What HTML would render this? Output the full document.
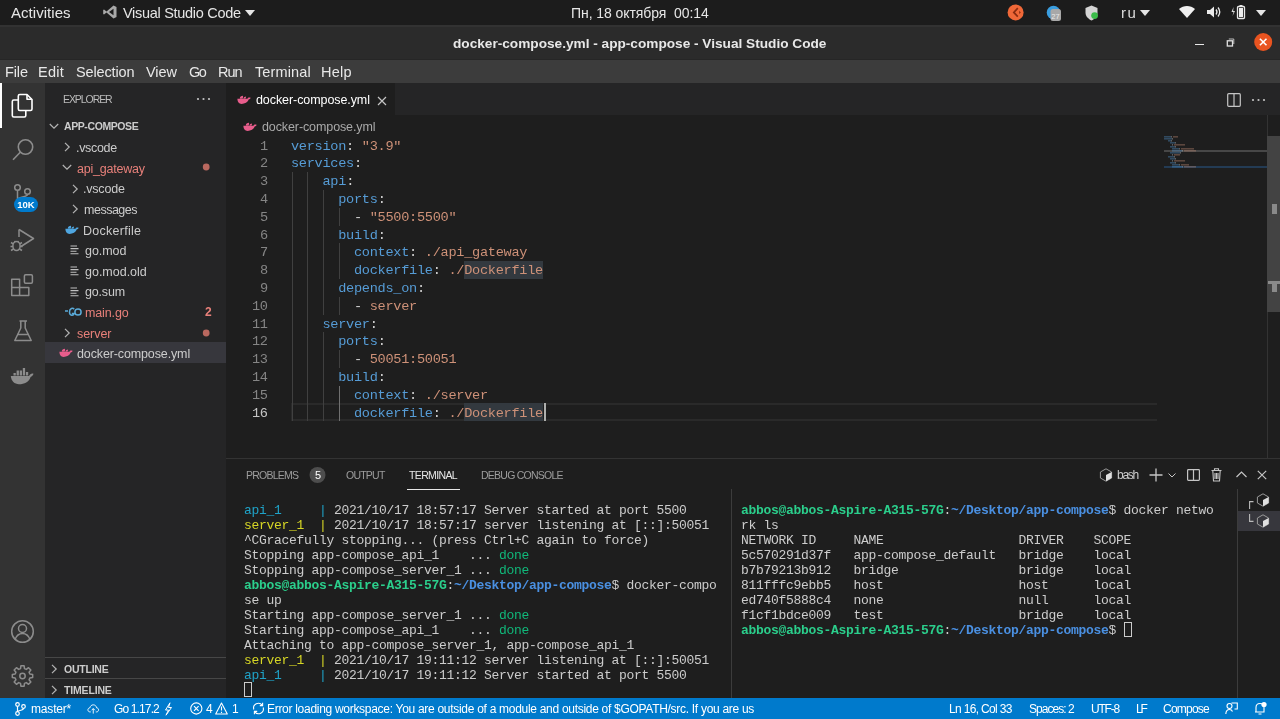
<!DOCTYPE html>
<html><head><meta charset="utf-8"><style>*{margin:0;padding:0;box-sizing:border-box}
html,body{width:1280px;height:719px;overflow:hidden;background:#1e1e1e;font-family:"Liberation Sans",sans-serif;position:relative}
.a{position:absolute;white-space:pre;will-change:transform}
.b{position:absolute}
svg{position:absolute;overflow:visible}
</style></head><body>
<div class="b" style="left:0;top:0;width:1280px;height:25px;background:#1c1c1c"></div>
<div class="b" style="left:0;top:25px;width:1280px;height:35px;background:#2b2b2b"></div>
<div class="b" style="left:0;top:60px;width:1280px;height:23px;background:#3c3c3c"></div>
<div class="b" style="left:0;top:25px;width:1280px;height:2px;background:#323232"></div>
<div class="b" style="left:0;top:59px;width:1280px;height:1px;background:#262626"></div>
<div class="b" style="left:0;top:83px;width:45px;height:615px;background:#333333"></div>
<div class="b" style="left:45px;top:83px;width:181px;height:615px;background:#252526"></div>
<div class="b" style="left:226px;top:83px;width:1054px;height:32px;background:#252526"></div>
<div class="b" style="left:226px;top:83px;width:169px;height:32px;background:#1e1e1e"></div>
<div class="b" style="left:226px;top:458px;width:1054px;height:1px;background:#333333"></div>
<div class="b" style="left:0;top:698px;width:1280px;height:21px;background:#007acc"></div>
<div class="a" style="left:11.00px;top:2.75px;font-size:15px;line-height:20px;color:#e6e6e6;letter-spacing:0.036px;">Activities</div>
<svg style="left:102px;top:4px" width="16" height="16" viewBox="0 0 16 16"><path d="M11.5 1.5 L14.5 3 V13 L11.5 14.5 L4.5 8.5 L2 10.5 L1.2 10 V6 L2 5.5 L4.5 7.5 Z M11.5 4.8 L7 8 L11.5 11.2 Z" fill="#a8a8a8" fill-rule="evenodd"/></svg>
<div class="a" style="left:123.00px;top:4.00px;font-size:14.5px;line-height:19px;color:#e6e6e6;letter-spacing:-0.294px;">Visual Studio Code</div>
<svg style="left:245px;top:10px" width="10" height="6"><path d="M0 0H10L5 6Z" fill="#e6e6e6"/></svg>
<div class="a" style="left:571.00px;top:3.75px;font-size:14px;line-height:18px;color:#e6e6e6;letter-spacing:-0.068px;">Пн, 18 октября  00:14</div>
<svg style="left:1006px;top:3px" width="20" height="20"><circle cx="9.6" cy="9.4" r="8" fill="#f06838"/><path d="M11.8 5.2 L7.8 9.4 L11.8 13.6" stroke="#8a2c10" stroke-width="1.7" fill="none"/><path d="M13.2 7.8 L14.8 9.4 L13.2 11" fill="#8a2c10"/></svg>
<svg style="left:1044px;top:3px" width="20" height="20"><circle cx="9.5" cy="9.5" r="6.8" fill="#3a9ee0"/><rect x="6.5" y="6" width="10.5" height="12" rx="2.5" fill="#a8a8a8"/><text x="7.3" y="15.5" font-size="7.5" font-family="Liberation Sans" fill="#e8e8e8">27</text></svg>
<svg style="left:1083px;top:3.5px" width="18" height="18"><path d="M8.5 1.5 L14.5 4 V8.5 C14.5 12.5 11.5 15 8.5 16.5 C5.5 15 2.5 12.5 2.5 8.5 V4Z" fill="#d4d4d4"/><circle cx="11.6" cy="11.6" r="3.4" fill="#3cbc4a"/></svg>
<div class="a" style="left:1120.50px;top:2.50px;font-size:15px;line-height:20px;color:#dcdcdc;letter-spacing:1.505px;">ru</div>
<svg style="left:1140px;top:10px" width="10" height="6"><path d="M0 0H10L5 6Z" fill="#e6e6e6"/></svg>
<svg style="left:1178px;top:4px" width="18" height="16"><path d="M9 14 L1 5 C5.5 1 12.5 1 17 5 Z" fill="#f0f0f0"/></svg>
<svg style="left:1205px;top:4px" width="18" height="16"><path d="M2 6 H5 L9 2.5 V13.5 L5 10 H2 Z" fill="#eaeaea"/><path d="M11 5.5 Q13 8 11 10.5 M13 3.5 Q16.5 8 13 12.5" stroke="#eaeaea" stroke-width="1.3" fill="none"/></svg>
<svg style="left:1230px;top:3px" width="18" height="18"><path d="M3.5 4 L1.5 9 H3.5 L2.5 13 L5 8 H3.2Z" fill="#dcdcdc"/><rect x="7.5" y="3.5" width="7" height="12" rx="1" fill="none" stroke="#e8e8e8" stroke-width="1.3"/><rect x="9.5" y="2" width="3" height="1.5" fill="#e8e8e8"/><rect x="9" y="5" width="4" height="9" fill="#eeeeee"/></svg>
<svg style="left:1256px;top:10px" width="10" height="6"><path d="M0 0H10L5 6Z" fill="#e6e6e6"/></svg>
<div class="a" style="left:453.00px;top:34.80px;font-size:13.65px;line-height:18px;color:#e8e8e8;font-weight:bold;">docker-compose.yml - app-compose - Visual Studio Code</div>
<div class="b" style="left:1195px;top:44px;width:9px;height:1.3px;background:#e8e8e8"></div>
<svg style="left:1225px;top:37px" width="10" height="10"><rect x="2.3" y="3.8" width="5.2" height="5.2" fill="none" stroke="#e0e0e0" stroke-width="1.3"/><path d="M3.8 2 H8.8 V7" fill="none" stroke="#cfcfcf" stroke-width="0.9"/></svg>
<svg style="left:1254px;top:33px" width="20" height="20"><circle cx="9.2" cy="9" r="9" fill="#e95420"/><path d="M5.9 5.7 L12.5 12.3 M12.5 5.7 L5.9 12.3" stroke="#fff" stroke-width="1.6"/></svg>
<div class="a" style="left:5.20px;top:63.00px;font-size:14.5px;line-height:19px;color:#e8e8e8;letter-spacing:-0.133px;">File</div>
<div class="a" style="left:38.40px;top:63.00px;font-size:14.5px;line-height:19px;color:#e8e8e8;letter-spacing:0.248px;">Edit</div>
<div class="a" style="left:75.90px;top:63.00px;font-size:14.5px;line-height:19px;color:#e8e8e8;letter-spacing:-0.136px;">Selection</div>
<div class="a" style="left:146.20px;top:63.00px;font-size:14.5px;line-height:19px;color:#e8e8e8;letter-spacing:-0.065px;">View</div>
<div class="a" style="left:189.00px;top:63.00px;font-size:14.5px;line-height:19px;color:#e8e8e8;letter-spacing:-1.579px;">Go</div>
<div class="a" style="left:217.80px;top:63.00px;font-size:14.5px;line-height:19px;color:#e8e8e8;letter-spacing:-0.968px;">Run</div>
<div class="a" style="left:255.30px;top:63.00px;font-size:14.5px;line-height:19px;color:#e8e8e8;letter-spacing:0.118px;">Terminal</div>
<div class="a" style="left:321.00px;top:63.00px;font-size:14.5px;line-height:19px;color:#e8e8e8;letter-spacing:0.248px;">Help</div>
<div class="b" style="left:0;top:83px;width:2px;height:45px;background:#ffffff"></div>
<svg style="left:10px;top:93px" width="25" height="26" viewBox="0 0 25 26"><g fill="none" stroke="#ffffff" stroke-width="1.6" stroke-linejoin="round"><path d="M9.8 1.5 H17 L22 6.5 V16 C22 16.8 21.3 17.5 20.5 17.5 H9.8 C9 17.5 8.3 16.8 8.3 16 V3 C8.3 2.2 9 1.5 9.8 1.5 Z"/><path d="M17 1.8 V6.2 H21.7"/><path d="M8.3 7 H3.8 C3 7 2.3 7.7 2.3 8.5 V22.5 C2.3 23.3 3 24 3.8 24 H14.3 C15.1 24 15.8 23.3 15.8 22.5 V17.5"/></g></svg>
<svg style="left:11px;top:138px" width="24" height="24" viewBox="0 0 24 24"><g fill="none" stroke="#8c8c8c" stroke-width="1.6"><circle cx="14.5" cy="9" r="7.2"/><path d="M9.5 14 L2 21.8"/></g></svg>
<svg style="left:11px;top:182px" width="24" height="24" viewBox="0 0 24 24"><g fill="none" stroke="#8c8c8c" stroke-width="1.5"><circle cx="6.5" cy="5.5" r="2.8"/><circle cx="16.5" cy="9.5" r="2.8"/><path d="M6.5 8.3 V20"/><path d="M16.5 12.3 C16.5 16 6.5 14 6.5 18"/></g></svg>
<div class="a" style="left:14px;top:197px;width:24px;height:15px;border-radius:8px;background:#007acc;color:#fff;font-size:9.5px;font-weight:bold;line-height:15px;text-align:center">10K</div>
<svg style="left:9px;top:227px" width="27" height="28" viewBox="0 0 27 28"><g fill="none" stroke="#8c8c8c" stroke-width="1.5" stroke-linejoin="round"><path d="M10 2.5 L24.5 11.5 L12 19.5"/><path d="M10 2.5 V10"/><ellipse cx="7.5" cy="19" rx="3.6" ry="4.5"/><path d="M2 15.5 L4.2 16.8 M13 15.5 L10.8 16.8 M1.5 19.5 H4 M13.5 19.5 H11 M2 23.5 L4.5 22 M13 23.5 L10.5 22 M5.5 14 L6.3 15 M9.5 14 L8.7 15"/></g></svg>
<svg style="left:10px;top:273px" width="25" height="26" viewBox="0 0 25 26"><g fill="none" stroke="#8c8c8c" stroke-width="1.5" stroke-linejoin="round"><path d="M1.7 6.2 H9.6 V14.6 H18.8 V22.4 H1.7 Z M1.7 14.6 H9.6 V22.4"/><rect x="14.4" y="1.7" width="8" height="8.5" rx="1.2"/></g></svg>
<svg style="left:13px;top:319px" width="20" height="24" viewBox="0 0 20 24"><g fill="none" stroke="#8c8c8c" stroke-width="1.5" stroke-linejoin="round"><path d="M6.5 2 H14"/><path d="M7.8 2 V9 L1.8 21.5 H18.2 L12.2 9 V2"/><path d="M4.5 15.5 H15.5"/></g></svg>
<svg style="left:10px;top:367px" width="24" height="18" viewBox="0 0 24 18"><path fill="#8c8c8c" d="M0.8 9 H19 C20 7.3 21.5 6 23.5 6.8 C23 8.6 21.8 9.6 20.6 9.9 C19 14.8 14.5 17.2 9 17.2 C4.5 17.2 1.2 14 0.8 9 Z"/><g fill="#8c8c8c"><rect x="3.5" y="6" width="2.3" height="2.5"/><rect x="6.6" y="3.5" width="2.3" height="5"/><rect x="9.7" y="3.5" width="2.3" height="5"/><rect x="12.8" y="1" width="2.3" height="7.5"/><rect x="15.9" y="5" width="2.3" height="3.5"/></g></svg>
<svg style="left:10px;top:619px" width="25" height="25" viewBox="0 0 25 25"><g fill="none" stroke="#8c8c8c" stroke-width="1.5"><circle cx="12.5" cy="12.5" r="10.8"/><circle cx="12.5" cy="9.5" r="4"/><path d="M5 20.5 C6.5 16.5 9 14.5 12.5 14.5 C16 14.5 18.5 16.5 20 20.5"/></g></svg>
<svg style="left:10px;top:664px" width="25" height="25" viewBox="0 0 25 25"><g fill="none" stroke="#8c8c8c" stroke-width="1.5" stroke-linejoin="round"><path d="M19.84 10.03 L22.67 10.39 L22.67 13.61 L19.84 13.97 L19.08 15.80 L20.83 18.05 L18.55 20.33 L16.30 18.58 L14.47 19.34 L14.11 22.17 L10.89 22.17 L10.53 19.34 L8.70 18.58 L6.45 20.33 L4.17 18.05 L5.92 15.80 L5.16 13.97 L2.33 13.61 L2.33 10.39 L5.16 10.03 L5.92 8.20 L4.17 5.95 L6.45 3.67 L8.70 5.42 L10.53 4.66 L10.89 1.83 L14.11 1.83 L14.47 4.66 L16.30 5.42 L18.55 3.67 L20.83 5.95 L19.08 8.20 Z"/><circle cx="12.5" cy="12.0" r="2.7"/></g></svg>
<div class="a" style="left:63.40px;top:92.40px;font-size:10.5px;line-height:14px;color:#bbbbbb;letter-spacing:-1.072px;">EXPLORER</div>
<svg style="left:196px;top:97px" width="16" height="4"><circle cx="2" cy="2" r="1.1" fill="#c5c5c5"/><circle cx="7.5" cy="2" r="1.1" fill="#c5c5c5"/><circle cx="13" cy="2" r="1.1" fill="#c5c5c5"/></svg>
<svg style="left:49px;top:123.39999999999999px" width="10" height="7"><path d="M0.8 1 L5 5.2 L9.2 1" fill="none" stroke="#b4b4b4" stroke-width="1.2"/></svg>
<div class="a" style="left:63.90px;top:119.25px;font-size:10.5px;line-height:14px;color:#cccccc;font-weight:bold;letter-spacing:-0.406px;">APP-COMPOSE</div>
<div class="b" style="left:45px;top:342px;width:181px;height:21px;background:#37373d"></div>
<svg style="left:63.5px;top:142.4px" width="7" height="10"><path d="M1 0.8 L5.2 5 L1 9.2" fill="none" stroke="#b4b4b4" stroke-width="1.2"/></svg>
<div class="a" style="left:76.10px;top:140.20px;font-size:12.5px;line-height:16px;color:#cccccc;letter-spacing:-0.321px;">.vscode</div>
<svg style="left:61.8px;top:164.3px" width="10" height="7"><path d="M0.8 1 L5 5.2 L9.2 1" fill="none" stroke="#b4b4b4" stroke-width="1.2"/></svg>
<div class="a" style="left:77.00px;top:160.80px;font-size:12.5px;line-height:16px;color:#e8807a;letter-spacing:-0.224px;">api_gateway</div>
<svg style="left:71.5px;top:183.60000000000002px" width="7" height="10"><path d="M1 0.8 L5.2 5 L1 9.2" fill="none" stroke="#b4b4b4" stroke-width="1.2"/></svg>
<div class="a" style="left:83.40px;top:181.40px;font-size:12.5px;line-height:16px;color:#cccccc;letter-spacing:-0.204px;">.vscode</div>
<svg style="left:71.5px;top:204.20000000000002px" width="7" height="10"><path d="M1 0.8 L5.2 5 L1 9.2" fill="none" stroke="#b4b4b4" stroke-width="1.2"/></svg>
<div class="a" style="left:84.40px;top:202.00px;font-size:12.5px;line-height:16px;color:#cccccc;letter-spacing:-0.489px;">messages</div>
<svg style="left:65.4px;top:224.8px" width="14" height="9.1" viewBox="0 0 20 13"><path fill="#4fa6e0" d="M0.5 5.5 H15 C15.5 3.5 17 3 19.5 3.8 C19 5.5 18 6 17 6.2 C15.5 10.5 11 12.8 6.5 12.8 C2.5 12.8 0.8 10 0.5 5.5 Z M4 5 C4 2.5 6 1 8.5 1 C9 2.5 8.5 4 8 5 Z M9 5 C9.5 3 11 2 13 2 C13 3.5 12.5 4.5 12 5 Z"/></svg>
<div class="a" style="left:83.40px;top:222.60px;font-size:12.5px;line-height:16px;color:#cccccc;letter-spacing:0.264px;">Dockerfile</div>
<svg style="left:70.3px;top:245.4px" width="10" height="10"><g stroke="#c0c0c0" stroke-width="1.1"><path d="M0.5 1 H7 M0.5 3.6 H8.5 M0.5 6.2 H6.5 M0.5 8.8 H8.5"/></g></svg>
<div class="a" style="left:84.80px;top:243.20px;font-size:12.5px;line-height:16px;color:#cccccc;letter-spacing:-0.048px;">go.mod</div>
<svg style="left:70.3px;top:266.0px" width="10" height="10"><g stroke="#c0c0c0" stroke-width="1.1"><path d="M0.5 1 H7 M0.5 3.6 H8.5 M0.5 6.2 H6.5 M0.5 8.8 H8.5"/></g></svg>
<div class="a" style="left:84.80px;top:263.80px;font-size:12.5px;line-height:16px;color:#cccccc;letter-spacing:-0.011px;">go.mod.old</div>
<svg style="left:70.3px;top:286.6px" width="10" height="10"><g stroke="#c0c0c0" stroke-width="1.1"><path d="M0.5 1 H7 M0.5 3.6 H8.5 M0.5 6.2 H6.5 M0.5 8.8 H8.5"/></g></svg>
<div class="a" style="left:84.80px;top:284.40px;font-size:12.5px;line-height:16px;color:#cccccc;letter-spacing:-0.176px;">go.sum</div>
<svg style="left:64.9px;top:307.20000000000005px" width="17" height="10" viewBox="0 0 17 10"><g fill="none" stroke="#5aaad8" stroke-width="1.5"><path d="M0 4 H3"/><path d="M9.2 2.2 C8 0.8 4.5 1 4.5 5 C4.5 9 8.5 9 9.2 6.5 H6.8"/><circle cx="13" cy="5" r="3.1"/></g></svg>
<div class="a" style="left:84.80px;top:305.00px;font-size:12.5px;line-height:16px;color:#e8807a;letter-spacing:-0.136px;">main.go</div>
<svg style="left:63.5px;top:327.8px" width="7" height="10"><path d="M1 0.8 L5.2 5 L1 9.2" fill="none" stroke="#b4b4b4" stroke-width="1.2"/></svg>
<div class="a" style="left:77.20px;top:325.60px;font-size:12.5px;line-height:16px;color:#e8807a;letter-spacing:-0.053px;">server</div>
<svg style="left:58.6px;top:348.4px" width="14" height="9.1" viewBox="0 0 20 13"><path fill="#e85d8c" d="M0.5 5.5 H15 C15.5 3.5 17 3 19.5 3.8 C19 5.5 18 6 17 6.2 C15.5 10.5 11 12.8 6.5 12.8 C2.5 12.8 0.8 10 0.5 5.5 Z M4 5 C4 2.5 6 1 8.5 1 C9 2.5 8.5 4 8 5 Z M9 5 C9.5 3 11 2 13 2 C13 3.5 12.5 4.5 12 5 Z"/></svg>
<div class="a" style="left:77.20px;top:346.20px;font-size:12.5px;line-height:16px;color:#cccccc;letter-spacing:-0.126px;">docker-compose.yml</div>
<svg style="left:202px;top:163.3px" width="8" height="8"><circle cx="4.2" cy="4" r="3.4" fill="#b9685f"/></svg>
<svg style="left:202px;top:328.5px" width="8" height="8"><circle cx="4.2" cy="4" r="3.4" fill="#b9685f"/></svg>
<div class="a" style="left:204.50px;top:304.20px;font-size:12px;line-height:16px;color:#e8807a;font-weight:bold;">2</div>
<div class="b" style="left:45px;top:657px;width:181px;height:1px;background:#474747"></div>
<div class="b" style="left:45px;top:678px;width:181px;height:1px;background:#474747"></div>
<svg style="left:50.5px;top:663.8px" width="7" height="10"><path d="M1 0.8 L5.2 5 L1 9.2" fill="none" stroke="#b4b4b4" stroke-width="1.2"/></svg>
<div class="a" style="left:64.00px;top:661.80px;font-size:10.5px;line-height:14px;color:#cccccc;font-weight:bold;letter-spacing:-0.230px;">OUTLINE</div>
<svg style="left:50.5px;top:684.5px" width="7" height="10"><path d="M1 0.8 L5.2 5 L1 9.2" fill="none" stroke="#b4b4b4" stroke-width="1.2"/></svg>
<div class="a" style="left:64.00px;top:682.50px;font-size:10.5px;line-height:14px;color:#cccccc;font-weight:bold;letter-spacing:-0.171px;">TIMELINE</div>
<svg style="left:237.2px;top:95.3px" width="14" height="9.1" viewBox="0 0 20 13"><path fill="#e85d8c" d="M0.5 5.5 H15 C15.5 3.5 17 3 19.5 3.8 C19 5.5 18 6 17 6.2 C15.5 10.5 11 12.8 6.5 12.8 C2.5 12.8 0.8 10 0.5 5.5 Z M4 5 C4 2.5 6 1 8.5 1 C9 2.5 8.5 4 8 5 Z M9 5 C9.5 3 11 2 13 2 C13 3.5 12.5 4.5 12 5 Z"/></svg>
<div class="a" style="left:256.00px;top:91.80px;font-size:12.5px;line-height:16px;color:#ffffff;letter-spacing:-0.079px;">docker-compose.yml</div>
<svg style="left:377px;top:96px" width="10" height="10"><path d="M1 1 L9 9 M9 1 L1 9" stroke="#c5c5c5" stroke-width="1.2"/></svg>
<svg style="left:1227px;top:93px" width="14" height="14"><rect x="0.7" y="0.7" width="12.6" height="12.6" rx="1" fill="none" stroke="#c5c5c5" stroke-width="1.2"/><path d="M7 0.7 V13.3" stroke="#c5c5c5" stroke-width="1.2"/></svg>
<svg style="left:1251px;top:98px" width="16" height="4"><circle cx="2" cy="2" r="1.1" fill="#c5c5c5"/><circle cx="7.5" cy="2" r="1.1" fill="#c5c5c5"/><circle cx="13" cy="2" r="1.1" fill="#c5c5c5"/></svg>
<svg style="left:242.7px;top:122px" width="14" height="9.1" viewBox="0 0 20 13"><path fill="#e85d8c" d="M0.5 5.5 H15 C15.5 3.5 17 3 19.5 3.8 C19 5.5 18 6 17 6.2 C15.5 10.5 11 12.8 6.5 12.8 C2.5 12.8 0.8 10 0.5 5.5 Z M4 5 C4 2.5 6 1 8.5 1 C9 2.5 8.5 4 8 5 Z M9 5 C9.5 3 11 2 13 2 C13 3.5 12.5 4.5 12 5 Z"/></svg>
<div class="a" style="left:261.90px;top:118.80px;font-size:12.5px;line-height:16px;color:#a9a9a9;letter-spacing:-0.102px;">docker-compose.yml</div>
<div class="b" style="left:291px;top:403.4px;width:866px;height:17.8px;border:2px solid #2a2a2a;border-right:none"></div>
<div class="b" style="left:464.25px;top:261.00px;width:78.75px;height:17.80px;background:#33393f"></div>
<div class="b" style="left:464.25px;top:403.40px;width:78.75px;height:17.80px;background:#33393f"></div>
<div class="b" style="left:292px;top:172.00px;width:1px;height:18.10px;background:#404040"></div>
<div class="b" style="left:307px;top:172.00px;width:1px;height:18.10px;background:#404040"></div>
<div class="b" style="left:292px;top:189.80px;width:1px;height:18.10px;background:#404040"></div>
<div class="b" style="left:307px;top:189.80px;width:1px;height:18.10px;background:#404040"></div>
<div class="b" style="left:323px;top:189.80px;width:1px;height:18.10px;background:#404040"></div>
<div class="b" style="left:292px;top:207.60px;width:1px;height:18.10px;background:#404040"></div>
<div class="b" style="left:307px;top:207.60px;width:1px;height:18.10px;background:#404040"></div>
<div class="b" style="left:323px;top:207.60px;width:1px;height:18.10px;background:#404040"></div>
<div class="b" style="left:339px;top:207.60px;width:1px;height:18.10px;background:#404040"></div>
<div class="b" style="left:292px;top:225.40px;width:1px;height:18.10px;background:#404040"></div>
<div class="b" style="left:307px;top:225.40px;width:1px;height:18.10px;background:#404040"></div>
<div class="b" style="left:323px;top:225.40px;width:1px;height:18.10px;background:#404040"></div>
<div class="b" style="left:292px;top:243.20px;width:1px;height:18.10px;background:#404040"></div>
<div class="b" style="left:307px;top:243.20px;width:1px;height:18.10px;background:#404040"></div>
<div class="b" style="left:323px;top:243.20px;width:1px;height:18.10px;background:#404040"></div>
<div class="b" style="left:339px;top:243.20px;width:1px;height:18.10px;background:#404040"></div>
<div class="b" style="left:292px;top:261.00px;width:1px;height:18.10px;background:#404040"></div>
<div class="b" style="left:307px;top:261.00px;width:1px;height:18.10px;background:#404040"></div>
<div class="b" style="left:323px;top:261.00px;width:1px;height:18.10px;background:#404040"></div>
<div class="b" style="left:339px;top:261.00px;width:1px;height:18.10px;background:#404040"></div>
<div class="b" style="left:292px;top:278.80px;width:1px;height:18.10px;background:#404040"></div>
<div class="b" style="left:307px;top:278.80px;width:1px;height:18.10px;background:#404040"></div>
<div class="b" style="left:323px;top:278.80px;width:1px;height:18.10px;background:#404040"></div>
<div class="b" style="left:292px;top:296.60px;width:1px;height:18.10px;background:#404040"></div>
<div class="b" style="left:307px;top:296.60px;width:1px;height:18.10px;background:#404040"></div>
<div class="b" style="left:323px;top:296.60px;width:1px;height:18.10px;background:#404040"></div>
<div class="b" style="left:339px;top:296.60px;width:1px;height:18.10px;background:#404040"></div>
<div class="b" style="left:292px;top:314.40px;width:1px;height:18.10px;background:#404040"></div>
<div class="b" style="left:307px;top:314.40px;width:1px;height:18.10px;background:#404040"></div>
<div class="b" style="left:292px;top:332.20px;width:1px;height:18.10px;background:#404040"></div>
<div class="b" style="left:307px;top:332.20px;width:1px;height:18.10px;background:#404040"></div>
<div class="b" style="left:323px;top:332.20px;width:1px;height:18.10px;background:#404040"></div>
<div class="b" style="left:292px;top:350.00px;width:1px;height:18.10px;background:#404040"></div>
<div class="b" style="left:307px;top:350.00px;width:1px;height:18.10px;background:#404040"></div>
<div class="b" style="left:323px;top:350.00px;width:1px;height:18.10px;background:#404040"></div>
<div class="b" style="left:339px;top:350.00px;width:1px;height:18.10px;background:#404040"></div>
<div class="b" style="left:292px;top:367.80px;width:1px;height:18.10px;background:#404040"></div>
<div class="b" style="left:307px;top:367.80px;width:1px;height:18.10px;background:#404040"></div>
<div class="b" style="left:323px;top:367.80px;width:1px;height:18.10px;background:#404040"></div>
<div class="b" style="left:292px;top:385.60px;width:1px;height:18.10px;background:#404040"></div>
<div class="b" style="left:307px;top:385.60px;width:1px;height:18.10px;background:#404040"></div>
<div class="b" style="left:323px;top:385.60px;width:1px;height:18.10px;background:#404040"></div>
<div class="b" style="left:339px;top:385.60px;width:1px;height:18.10px;background:#707070"></div>
<div class="b" style="left:292px;top:403.40px;width:1px;height:18.10px;background:#404040"></div>
<div class="b" style="left:307px;top:403.40px;width:1px;height:18.10px;background:#404040"></div>
<div class="b" style="left:323px;top:403.40px;width:1px;height:18.10px;background:#404040"></div>
<div class="b" style="left:339px;top:403.40px;width:1px;height:18.10px;background:#707070"></div>
<div class="a" style="left:259.62px;top:137.60px;font-family:'Liberation Mono',monospace;font-size:13.6px;letter-spacing:-0.285px;line-height:17.8px;color:#858585">1</div>
<div class="a" style="left:291px;top:137.60px;font-family:'Liberation Mono',monospace;font-size:13.6px;letter-spacing:-0.285px;line-height:17.8px"><span style="color:#569cd6">version</span><span style="color:#d4d4d4">: </span><span style="color:#ce9178">"3.9"</span></div>
<div class="a" style="left:259.62px;top:155.40px;font-family:'Liberation Mono',monospace;font-size:13.6px;letter-spacing:-0.285px;line-height:17.8px;color:#858585">2</div>
<div class="a" style="left:291px;top:155.40px;font-family:'Liberation Mono',monospace;font-size:13.6px;letter-spacing:-0.285px;line-height:17.8px"><span style="color:#569cd6">services</span><span style="color:#d4d4d4">:</span></div>
<div class="a" style="left:259.62px;top:173.20px;font-family:'Liberation Mono',monospace;font-size:13.6px;letter-spacing:-0.285px;line-height:17.8px;color:#858585">3</div>
<div class="a" style="left:291px;top:173.20px;font-family:'Liberation Mono',monospace;font-size:13.6px;letter-spacing:-0.285px;line-height:17.8px"><span style="color:#d4d4d4">    </span><span style="color:#569cd6">api</span><span style="color:#d4d4d4">:</span></div>
<div class="a" style="left:259.62px;top:191.00px;font-family:'Liberation Mono',monospace;font-size:13.6px;letter-spacing:-0.285px;line-height:17.8px;color:#858585">4</div>
<div class="a" style="left:291px;top:191.00px;font-family:'Liberation Mono',monospace;font-size:13.6px;letter-spacing:-0.285px;line-height:17.8px"><span style="color:#d4d4d4">      </span><span style="color:#569cd6">ports</span><span style="color:#d4d4d4">:</span></div>
<div class="a" style="left:259.62px;top:208.80px;font-family:'Liberation Mono',monospace;font-size:13.6px;letter-spacing:-0.285px;line-height:17.8px;color:#858585">5</div>
<div class="a" style="left:291px;top:208.80px;font-family:'Liberation Mono',monospace;font-size:13.6px;letter-spacing:-0.285px;line-height:17.8px"><span style="color:#d4d4d4">        - </span><span style="color:#ce9178">"5500:5500"</span></div>
<div class="a" style="left:259.62px;top:226.60px;font-family:'Liberation Mono',monospace;font-size:13.6px;letter-spacing:-0.285px;line-height:17.8px;color:#858585">6</div>
<div class="a" style="left:291px;top:226.60px;font-family:'Liberation Mono',monospace;font-size:13.6px;letter-spacing:-0.285px;line-height:17.8px"><span style="color:#d4d4d4">      </span><span style="color:#569cd6">build</span><span style="color:#d4d4d4">:</span></div>
<div class="a" style="left:259.62px;top:244.40px;font-family:'Liberation Mono',monospace;font-size:13.6px;letter-spacing:-0.285px;line-height:17.8px;color:#858585">7</div>
<div class="a" style="left:291px;top:244.40px;font-family:'Liberation Mono',monospace;font-size:13.6px;letter-spacing:-0.285px;line-height:17.8px"><span style="color:#d4d4d4">        </span><span style="color:#569cd6">context</span><span style="color:#d4d4d4">: </span><span style="color:#ce9178">./api_gateway</span></div>
<div class="a" style="left:259.62px;top:262.20px;font-family:'Liberation Mono',monospace;font-size:13.6px;letter-spacing:-0.285px;line-height:17.8px;color:#858585">8</div>
<div class="a" style="left:291px;top:262.20px;font-family:'Liberation Mono',monospace;font-size:13.6px;letter-spacing:-0.285px;line-height:17.8px"><span style="color:#d4d4d4">        </span><span style="color:#569cd6">dockerfile</span><span style="color:#d4d4d4">: </span><span style="color:#ce9178">./Dockerfile</span></div>
<div class="a" style="left:259.62px;top:280.00px;font-family:'Liberation Mono',monospace;font-size:13.6px;letter-spacing:-0.285px;line-height:17.8px;color:#858585">9</div>
<div class="a" style="left:291px;top:280.00px;font-family:'Liberation Mono',monospace;font-size:13.6px;letter-spacing:-0.285px;line-height:17.8px"><span style="color:#d4d4d4">      </span><span style="color:#569cd6">depends_on</span><span style="color:#d4d4d4">:</span></div>
<div class="a" style="left:251.75px;top:297.80px;font-family:'Liberation Mono',monospace;font-size:13.6px;letter-spacing:-0.285px;line-height:17.8px;color:#858585">10</div>
<div class="a" style="left:291px;top:297.80px;font-family:'Liberation Mono',monospace;font-size:13.6px;letter-spacing:-0.285px;line-height:17.8px"><span style="color:#d4d4d4">        - </span><span style="color:#ce9178">server</span></div>
<div class="a" style="left:251.75px;top:315.60px;font-family:'Liberation Mono',monospace;font-size:13.6px;letter-spacing:-0.285px;line-height:17.8px;color:#858585">11</div>
<div class="a" style="left:291px;top:315.60px;font-family:'Liberation Mono',monospace;font-size:13.6px;letter-spacing:-0.285px;line-height:17.8px"><span style="color:#d4d4d4">    </span><span style="color:#569cd6">server</span><span style="color:#d4d4d4">:</span></div>
<div class="a" style="left:251.75px;top:333.40px;font-family:'Liberation Mono',monospace;font-size:13.6px;letter-spacing:-0.285px;line-height:17.8px;color:#858585">12</div>
<div class="a" style="left:291px;top:333.40px;font-family:'Liberation Mono',monospace;font-size:13.6px;letter-spacing:-0.285px;line-height:17.8px"><span style="color:#d4d4d4">      </span><span style="color:#569cd6">ports</span><span style="color:#d4d4d4">:</span></div>
<div class="a" style="left:251.75px;top:351.20px;font-family:'Liberation Mono',monospace;font-size:13.6px;letter-spacing:-0.285px;line-height:17.8px;color:#858585">13</div>
<div class="a" style="left:291px;top:351.20px;font-family:'Liberation Mono',monospace;font-size:13.6px;letter-spacing:-0.285px;line-height:17.8px"><span style="color:#d4d4d4">        - </span><span style="color:#ce9178">50051:50051</span></div>
<div class="a" style="left:251.75px;top:369.00px;font-family:'Liberation Mono',monospace;font-size:13.6px;letter-spacing:-0.285px;line-height:17.8px;color:#858585">14</div>
<div class="a" style="left:291px;top:369.00px;font-family:'Liberation Mono',monospace;font-size:13.6px;letter-spacing:-0.285px;line-height:17.8px"><span style="color:#d4d4d4">      </span><span style="color:#569cd6">build</span><span style="color:#d4d4d4">:</span></div>
<div class="a" style="left:251.75px;top:386.80px;font-family:'Liberation Mono',monospace;font-size:13.6px;letter-spacing:-0.285px;line-height:17.8px;color:#858585">15</div>
<div class="a" style="left:291px;top:386.80px;font-family:'Liberation Mono',monospace;font-size:13.6px;letter-spacing:-0.285px;line-height:17.8px"><span style="color:#d4d4d4">        </span><span style="color:#569cd6">context</span><span style="color:#d4d4d4">: </span><span style="color:#ce9178">./server</span></div>
<div class="a" style="left:251.75px;top:404.60px;font-family:'Liberation Mono',monospace;font-size:13.6px;letter-spacing:-0.285px;line-height:17.8px;color:#c6c6c6">16</div>
<div class="a" style="left:291px;top:404.60px;font-family:'Liberation Mono',monospace;font-size:13.6px;letter-spacing:-0.285px;line-height:17.8px"><span style="color:#d4d4d4">        </span><span style="color:#569cd6">dockerfile</span><span style="color:#d4d4d4">: </span><span style="color:#ce9178">./Dockerfile</span></div>
<div class="b" style="left:544px;top:403.40px;width:2px;height:17.80px;background:#aeafad"></div>
<svg style="left:1164px;top:136px" width="103" height="34"><rect x="0" y="14" width="103" height="2" fill="#474747"/><rect x="0" y="30" width="103" height="2" fill="#264f78" opacity="0.6"/><rect x="0" y="0" width="0.9" height="1.6" fill="#569cd6" opacity="0.4"/><rect x="1" y="0" width="0.9" height="1.6" fill="#569cd6" opacity="0.4"/><rect x="2" y="0" width="0.9" height="1.6" fill="#569cd6" opacity="0.4"/><rect x="3" y="0" width="0.9" height="1.6" fill="#569cd6" opacity="0.4"/><rect x="4" y="0" width="0.9" height="1.6" fill="#569cd6" opacity="0.4"/><rect x="5" y="0" width="0.9" height="1.6" fill="#569cd6" opacity="0.4"/><rect x="6" y="0" width="0.9" height="1.6" fill="#569cd6" opacity="0.4"/><rect x="7" y="0" width="0.9" height="1.6" fill="#d4d4d4" opacity="0.4"/><rect x="9" y="0" width="0.9" height="1.6" fill="#ce9178" opacity="0.4"/><rect x="10" y="0" width="0.9" height="1.6" fill="#ce9178" opacity="0.4"/><rect x="11" y="0" width="0.9" height="1.6" fill="#ce9178" opacity="0.4"/><rect x="12" y="0" width="0.9" height="1.6" fill="#ce9178" opacity="0.4"/><rect x="13" y="0" width="0.9" height="1.6" fill="#ce9178" opacity="0.4"/><rect x="0" y="2" width="0.9" height="1.6" fill="#569cd6" opacity="0.4"/><rect x="1" y="2" width="0.9" height="1.6" fill="#569cd6" opacity="0.4"/><rect x="2" y="2" width="0.9" height="1.6" fill="#569cd6" opacity="0.4"/><rect x="3" y="2" width="0.9" height="1.6" fill="#569cd6" opacity="0.4"/><rect x="4" y="2" width="0.9" height="1.6" fill="#569cd6" opacity="0.4"/><rect x="5" y="2" width="0.9" height="1.6" fill="#569cd6" opacity="0.4"/><rect x="6" y="2" width="0.9" height="1.6" fill="#569cd6" opacity="0.4"/><rect x="7" y="2" width="0.9" height="1.6" fill="#569cd6" opacity="0.4"/><rect x="8" y="2" width="0.9" height="1.6" fill="#d4d4d4" opacity="0.4"/><rect x="4" y="4" width="0.9" height="1.6" fill="#569cd6" opacity="0.4"/><rect x="5" y="4" width="0.9" height="1.6" fill="#569cd6" opacity="0.4"/><rect x="6" y="4" width="0.9" height="1.6" fill="#569cd6" opacity="0.4"/><rect x="7" y="4" width="0.9" height="1.6" fill="#d4d4d4" opacity="0.4"/><rect x="6" y="6" width="0.9" height="1.6" fill="#569cd6" opacity="0.4"/><rect x="7" y="6" width="0.9" height="1.6" fill="#569cd6" opacity="0.4"/><rect x="8" y="6" width="0.9" height="1.6" fill="#569cd6" opacity="0.4"/><rect x="9" y="6" width="0.9" height="1.6" fill="#569cd6" opacity="0.4"/><rect x="10" y="6" width="0.9" height="1.6" fill="#569cd6" opacity="0.4"/><rect x="11" y="6" width="0.9" height="1.6" fill="#d4d4d4" opacity="0.4"/><rect x="8" y="8" width="0.9" height="1.6" fill="#d4d4d4" opacity="0.4"/><rect x="10" y="8" width="0.9" height="1.6" fill="#ce9178" opacity="0.4"/><rect x="11" y="8" width="0.9" height="1.6" fill="#ce9178" opacity="0.4"/><rect x="12" y="8" width="0.9" height="1.6" fill="#ce9178" opacity="0.4"/><rect x="13" y="8" width="0.9" height="1.6" fill="#ce9178" opacity="0.4"/><rect x="14" y="8" width="0.9" height="1.6" fill="#ce9178" opacity="0.4"/><rect x="15" y="8" width="0.9" height="1.6" fill="#ce9178" opacity="0.4"/><rect x="16" y="8" width="0.9" height="1.6" fill="#ce9178" opacity="0.4"/><rect x="17" y="8" width="0.9" height="1.6" fill="#ce9178" opacity="0.4"/><rect x="18" y="8" width="0.9" height="1.6" fill="#ce9178" opacity="0.4"/><rect x="19" y="8" width="0.9" height="1.6" fill="#ce9178" opacity="0.4"/><rect x="20" y="8" width="0.9" height="1.6" fill="#ce9178" opacity="0.4"/><rect x="6" y="10" width="0.9" height="1.6" fill="#569cd6" opacity="0.4"/><rect x="7" y="10" width="0.9" height="1.6" fill="#569cd6" opacity="0.4"/><rect x="8" y="10" width="0.9" height="1.6" fill="#569cd6" opacity="0.4"/><rect x="9" y="10" width="0.9" height="1.6" fill="#569cd6" opacity="0.4"/><rect x="10" y="10" width="0.9" height="1.6" fill="#569cd6" opacity="0.4"/><rect x="11" y="10" width="0.9" height="1.6" fill="#d4d4d4" opacity="0.4"/><rect x="8" y="12" width="0.9" height="1.6" fill="#569cd6" opacity="0.4"/><rect x="9" y="12" width="0.9" height="1.6" fill="#569cd6" opacity="0.4"/><rect x="10" y="12" width="0.9" height="1.6" fill="#569cd6" opacity="0.4"/><rect x="11" y="12" width="0.9" height="1.6" fill="#569cd6" opacity="0.4"/><rect x="12" y="12" width="0.9" height="1.6" fill="#569cd6" opacity="0.4"/><rect x="13" y="12" width="0.9" height="1.6" fill="#569cd6" opacity="0.4"/><rect x="14" y="12" width="0.9" height="1.6" fill="#569cd6" opacity="0.4"/><rect x="15" y="12" width="0.9" height="1.6" fill="#d4d4d4" opacity="0.4"/><rect x="17" y="12" width="0.9" height="1.6" fill="#ce9178" opacity="0.4"/><rect x="18" y="12" width="0.9" height="1.6" fill="#ce9178" opacity="0.4"/><rect x="19" y="12" width="0.9" height="1.6" fill="#ce9178" opacity="0.4"/><rect x="20" y="12" width="0.9" height="1.6" fill="#ce9178" opacity="0.4"/><rect x="21" y="12" width="0.9" height="1.6" fill="#ce9178" opacity="0.4"/><rect x="22" y="12" width="0.9" height="1.6" fill="#ce9178" opacity="0.4"/><rect x="23" y="12" width="0.9" height="1.6" fill="#ce9178" opacity="0.4"/><rect x="24" y="12" width="0.9" height="1.6" fill="#ce9178" opacity="0.4"/><rect x="25" y="12" width="0.9" height="1.6" fill="#ce9178" opacity="0.4"/><rect x="26" y="12" width="0.9" height="1.6" fill="#ce9178" opacity="0.4"/><rect x="27" y="12" width="0.9" height="1.6" fill="#ce9178" opacity="0.4"/><rect x="28" y="12" width="0.9" height="1.6" fill="#ce9178" opacity="0.4"/><rect x="29" y="12" width="0.9" height="1.6" fill="#ce9178" opacity="0.4"/><rect x="8" y="14" width="0.9" height="1.6" fill="#569cd6" opacity="0.4"/><rect x="9" y="14" width="0.9" height="1.6" fill="#569cd6" opacity="0.4"/><rect x="10" y="14" width="0.9" height="1.6" fill="#569cd6" opacity="0.4"/><rect x="11" y="14" width="0.9" height="1.6" fill="#569cd6" opacity="0.4"/><rect x="12" y="14" width="0.9" height="1.6" fill="#569cd6" opacity="0.4"/><rect x="13" y="14" width="0.9" height="1.6" fill="#569cd6" opacity="0.4"/><rect x="14" y="14" width="0.9" height="1.6" fill="#569cd6" opacity="0.4"/><rect x="15" y="14" width="0.9" height="1.6" fill="#569cd6" opacity="0.4"/><rect x="16" y="14" width="0.9" height="1.6" fill="#569cd6" opacity="0.4"/><rect x="17" y="14" width="0.9" height="1.6" fill="#569cd6" opacity="0.4"/><rect x="18" y="14" width="0.9" height="1.6" fill="#d4d4d4" opacity="0.4"/><rect x="20" y="14" width="0.9" height="1.6" fill="#ce9178" opacity="0.4"/><rect x="21" y="14" width="0.9" height="1.6" fill="#ce9178" opacity="0.4"/><rect x="22" y="14" width="0.9" height="1.6" fill="#ce9178" opacity="0.4"/><rect x="23" y="14" width="0.9" height="1.6" fill="#ce9178" opacity="0.4"/><rect x="24" y="14" width="0.9" height="1.6" fill="#ce9178" opacity="0.4"/><rect x="25" y="14" width="0.9" height="1.6" fill="#ce9178" opacity="0.4"/><rect x="26" y="14" width="0.9" height="1.6" fill="#ce9178" opacity="0.4"/><rect x="27" y="14" width="0.9" height="1.6" fill="#ce9178" opacity="0.4"/><rect x="28" y="14" width="0.9" height="1.6" fill="#ce9178" opacity="0.4"/><rect x="29" y="14" width="0.9" height="1.6" fill="#ce9178" opacity="0.4"/><rect x="30" y="14" width="0.9" height="1.6" fill="#ce9178" opacity="0.4"/><rect x="31" y="14" width="0.9" height="1.6" fill="#ce9178" opacity="0.4"/><rect x="6" y="16" width="0.9" height="1.6" fill="#569cd6" opacity="0.4"/><rect x="7" y="16" width="0.9" height="1.6" fill="#569cd6" opacity="0.4"/><rect x="8" y="16" width="0.9" height="1.6" fill="#569cd6" opacity="0.4"/><rect x="9" y="16" width="0.9" height="1.6" fill="#569cd6" opacity="0.4"/><rect x="10" y="16" width="0.9" height="1.6" fill="#569cd6" opacity="0.4"/><rect x="11" y="16" width="0.9" height="1.6" fill="#569cd6" opacity="0.4"/><rect x="12" y="16" width="0.9" height="1.6" fill="#569cd6" opacity="0.4"/><rect x="13" y="16" width="0.9" height="1.6" fill="#569cd6" opacity="0.4"/><rect x="14" y="16" width="0.9" height="1.6" fill="#569cd6" opacity="0.4"/><rect x="15" y="16" width="0.9" height="1.6" fill="#569cd6" opacity="0.4"/><rect x="16" y="16" width="0.9" height="1.6" fill="#d4d4d4" opacity="0.4"/><rect x="8" y="18" width="0.9" height="1.6" fill="#d4d4d4" opacity="0.4"/><rect x="10" y="18" width="0.9" height="1.6" fill="#ce9178" opacity="0.4"/><rect x="11" y="18" width="0.9" height="1.6" fill="#ce9178" opacity="0.4"/><rect x="12" y="18" width="0.9" height="1.6" fill="#ce9178" opacity="0.4"/><rect x="13" y="18" width="0.9" height="1.6" fill="#ce9178" opacity="0.4"/><rect x="14" y="18" width="0.9" height="1.6" fill="#ce9178" opacity="0.4"/><rect x="15" y="18" width="0.9" height="1.6" fill="#ce9178" opacity="0.4"/><rect x="4" y="20" width="0.9" height="1.6" fill="#569cd6" opacity="0.4"/><rect x="5" y="20" width="0.9" height="1.6" fill="#569cd6" opacity="0.4"/><rect x="6" y="20" width="0.9" height="1.6" fill="#569cd6" opacity="0.4"/><rect x="7" y="20" width="0.9" height="1.6" fill="#569cd6" opacity="0.4"/><rect x="8" y="20" width="0.9" height="1.6" fill="#569cd6" opacity="0.4"/><rect x="9" y="20" width="0.9" height="1.6" fill="#569cd6" opacity="0.4"/><rect x="10" y="20" width="0.9" height="1.6" fill="#d4d4d4" opacity="0.4"/><rect x="6" y="22" width="0.9" height="1.6" fill="#569cd6" opacity="0.4"/><rect x="7" y="22" width="0.9" height="1.6" fill="#569cd6" opacity="0.4"/><rect x="8" y="22" width="0.9" height="1.6" fill="#569cd6" opacity="0.4"/><rect x="9" y="22" width="0.9" height="1.6" fill="#569cd6" opacity="0.4"/><rect x="10" y="22" width="0.9" height="1.6" fill="#569cd6" opacity="0.4"/><rect x="11" y="22" width="0.9" height="1.6" fill="#d4d4d4" opacity="0.4"/><rect x="8" y="24" width="0.9" height="1.6" fill="#d4d4d4" opacity="0.4"/><rect x="10" y="24" width="0.9" height="1.6" fill="#ce9178" opacity="0.4"/><rect x="11" y="24" width="0.9" height="1.6" fill="#ce9178" opacity="0.4"/><rect x="12" y="24" width="0.9" height="1.6" fill="#ce9178" opacity="0.4"/><rect x="13" y="24" width="0.9" height="1.6" fill="#ce9178" opacity="0.4"/><rect x="14" y="24" width="0.9" height="1.6" fill="#ce9178" opacity="0.4"/><rect x="15" y="24" width="0.9" height="1.6" fill="#ce9178" opacity="0.4"/><rect x="16" y="24" width="0.9" height="1.6" fill="#ce9178" opacity="0.4"/><rect x="17" y="24" width="0.9" height="1.6" fill="#ce9178" opacity="0.4"/><rect x="18" y="24" width="0.9" height="1.6" fill="#ce9178" opacity="0.4"/><rect x="19" y="24" width="0.9" height="1.6" fill="#ce9178" opacity="0.4"/><rect x="20" y="24" width="0.9" height="1.6" fill="#ce9178" opacity="0.4"/><rect x="6" y="26" width="0.9" height="1.6" fill="#569cd6" opacity="0.4"/><rect x="7" y="26" width="0.9" height="1.6" fill="#569cd6" opacity="0.4"/><rect x="8" y="26" width="0.9" height="1.6" fill="#569cd6" opacity="0.4"/><rect x="9" y="26" width="0.9" height="1.6" fill="#569cd6" opacity="0.4"/><rect x="10" y="26" width="0.9" height="1.6" fill="#569cd6" opacity="0.4"/><rect x="11" y="26" width="0.9" height="1.6" fill="#d4d4d4" opacity="0.4"/><rect x="8" y="28" width="0.9" height="1.6" fill="#569cd6" opacity="0.4"/><rect x="9" y="28" width="0.9" height="1.6" fill="#569cd6" opacity="0.4"/><rect x="10" y="28" width="0.9" height="1.6" fill="#569cd6" opacity="0.4"/><rect x="11" y="28" width="0.9" height="1.6" fill="#569cd6" opacity="0.4"/><rect x="12" y="28" width="0.9" height="1.6" fill="#569cd6" opacity="0.4"/><rect x="13" y="28" width="0.9" height="1.6" fill="#569cd6" opacity="0.4"/><rect x="14" y="28" width="0.9" height="1.6" fill="#569cd6" opacity="0.4"/><rect x="15" y="28" width="0.9" height="1.6" fill="#d4d4d4" opacity="0.4"/><rect x="17" y="28" width="0.9" height="1.6" fill="#ce9178" opacity="0.4"/><rect x="18" y="28" width="0.9" height="1.6" fill="#ce9178" opacity="0.4"/><rect x="19" y="28" width="0.9" height="1.6" fill="#ce9178" opacity="0.4"/><rect x="20" y="28" width="0.9" height="1.6" fill="#ce9178" opacity="0.4"/><rect x="21" y="28" width="0.9" height="1.6" fill="#ce9178" opacity="0.4"/><rect x="22" y="28" width="0.9" height="1.6" fill="#ce9178" opacity="0.4"/><rect x="23" y="28" width="0.9" height="1.6" fill="#ce9178" opacity="0.4"/><rect x="24" y="28" width="0.9" height="1.6" fill="#ce9178" opacity="0.4"/><rect x="8" y="30" width="0.9" height="1.6" fill="#569cd6" opacity="0.4"/><rect x="9" y="30" width="0.9" height="1.6" fill="#569cd6" opacity="0.4"/><rect x="10" y="30" width="0.9" height="1.6" fill="#569cd6" opacity="0.4"/><rect x="11" y="30" width="0.9" height="1.6" fill="#569cd6" opacity="0.4"/><rect x="12" y="30" width="0.9" height="1.6" fill="#569cd6" opacity="0.4"/><rect x="13" y="30" width="0.9" height="1.6" fill="#569cd6" opacity="0.4"/><rect x="14" y="30" width="0.9" height="1.6" fill="#569cd6" opacity="0.4"/><rect x="15" y="30" width="0.9" height="1.6" fill="#569cd6" opacity="0.4"/><rect x="16" y="30" width="0.9" height="1.6" fill="#569cd6" opacity="0.4"/><rect x="17" y="30" width="0.9" height="1.6" fill="#569cd6" opacity="0.4"/><rect x="18" y="30" width="0.9" height="1.6" fill="#d4d4d4" opacity="0.4"/><rect x="20" y="30" width="0.9" height="1.6" fill="#ce9178" opacity="0.4"/><rect x="21" y="30" width="0.9" height="1.6" fill="#ce9178" opacity="0.4"/><rect x="22" y="30" width="0.9" height="1.6" fill="#ce9178" opacity="0.4"/><rect x="23" y="30" width="0.9" height="1.6" fill="#ce9178" opacity="0.4"/><rect x="24" y="30" width="0.9" height="1.6" fill="#ce9178" opacity="0.4"/><rect x="25" y="30" width="0.9" height="1.6" fill="#ce9178" opacity="0.4"/><rect x="26" y="30" width="0.9" height="1.6" fill="#ce9178" opacity="0.4"/><rect x="27" y="30" width="0.9" height="1.6" fill="#ce9178" opacity="0.4"/><rect x="28" y="30" width="0.9" height="1.6" fill="#ce9178" opacity="0.4"/><rect x="29" y="30" width="0.9" height="1.6" fill="#ce9178" opacity="0.4"/><rect x="30" y="30" width="0.9" height="1.6" fill="#ce9178" opacity="0.4"/><rect x="31" y="30" width="0.9" height="1.6" fill="#ce9178" opacity="0.4"/></svg>
<div class="b" style="left:1267px;top:115px;width:1px;height:343px;background:#333333"></div>
<div class="b" style="left:1267px;top:136px;width:13px;height:176px;background:#434343"></div>
<div class="b" style="left:1272px;top:204px;width:5px;height:10px;background:#8a8a8a"></div>
<div class="b" style="left:1268px;top:281px;width:12px;height:3px;background:#8a8a8a"></div>
<div class="b" style="left:1272px;top:281px;width:5px;height:11px;background:#8a8a8a"></div>
<div class="a" style="left:246.40px;top:468.00px;font-size:10.5px;line-height:14px;color:#9d9d9d;letter-spacing:-0.778px;">PROBLEMS</div>
<svg style="left:309px;top:467px" width="17" height="17"><circle cx="8.5" cy="8" r="8" fill="#4d4d4d"/></svg>
<div class="a" style="left:314.80px;top:468.00px;font-size:11px;line-height:14px;color:#ffffff;">5</div>
<div class="a" style="left:346.40px;top:468.00px;font-size:10.5px;line-height:14px;color:#9d9d9d;letter-spacing:-0.770px;">OUTPUT</div>
<div class="a" style="left:409.00px;top:468.00px;font-size:10.5px;line-height:14px;color:#e7e7e7;letter-spacing:-0.636px;">TERMINAL</div>
<div class="b" style="left:407px;top:489px;width:53px;height:1px;background:#e7e7e7"></div>
<div class="a" style="left:481.00px;top:468.00px;font-size:10.5px;line-height:14px;color:#9d9d9d;letter-spacing:-0.758px;">DEBUG CONSOLE</div>
<svg style="left:1099px;top:468px" width="14" height="14" viewBox="0 0 14 14"><path d="M7 0.8 L12.6 4 V10 L7 13.2 L1.4 10 V4 Z" fill="none" stroke="#9a9a9a" stroke-width="1"/><path d="M7 7 L12.6 4 V10 L7 13.2 Z" fill="#e0e0e0"/></svg>
<div class="a" style="left:1117.40px;top:466.80px;font-size:12px;line-height:16px;color:#cccccc;letter-spacing:-1.249px;">bash</div>
<svg style="left:1149px;top:468px" width="14" height="14"><path d="M7 0.5 V13.5 M0.5 7 H13.5" stroke="#c5c5c5" stroke-width="1.3"/></svg>
<svg style="left:1168px;top:473px" width="8" height="5"><path d="M0.5 0.5 L4 4 L7.5 0.5" fill="none" stroke="#c5c5c5" stroke-width="1"/></svg>
<svg style="left:1187px;top:469px" width="13" height="12"><rect x="0.6" y="0.6" width="11.8" height="10.8" rx="0.8" fill="none" stroke="#c5c5c5" stroke-width="1.2"/><path d="M6.5 0.6 V11.4" stroke="#c5c5c5" stroke-width="1.2"/></svg>
<svg style="left:1211px;top:468px" width="11" height="14"><path d="M0.5 2.5 H10.5 M3.5 2.5 V0.8 H7.5 V2.5 M1.8 2.5 L2.5 13 H8.5 L9.2 2.5 M4 5 V11 M5.5 5 V11 M7 5 V11" fill="none" stroke="#c5c5c5" stroke-width="1.1"/></svg>
<svg style="left:1236px;top:471px" width="11" height="7"><path d="M0.5 6 L5.5 1 L10.5 6" fill="none" stroke="#c5c5c5" stroke-width="1.2"/></svg>
<svg style="left:1257px;top:470px" width="10" height="10"><path d="M0.8 0.8 L9.2 9.2 M9.2 0.8 L0.8 9.2" stroke="#c5c5c5" stroke-width="1.2"/></svg>
<div class="b" style="left:731px;top:489px;width:1px;height:209px;background:#3c3c3c"></div>
<div class="b" style="left:1237px;top:489px;width:1px;height:209px;background:#3c3c3c"></div>
<div class="b" style="left:1238px;top:511px;width:42px;height:20px;background:#37373d"></div>
<svg style="left:1256px;top:493px" width="14" height="14" viewBox="0 0 14 14"><path d="M7 0.8 L12.6 4 V10 L7 13.2 L1.4 10 V4 Z" fill="none" stroke="#9a9a9a" stroke-width="1"/><path d="M7 7 L12.6 4 V10 L7 13.2 Z" fill="#e0e0e0"/></svg>
<svg style="left:1256px;top:514px" width="14" height="14" viewBox="0 0 14 14"><path d="M7 0.8 L12.6 4 V10 L7 13.2 L1.4 10 V4 Z" fill="none" stroke="#9a9a9a" stroke-width="1"/><path d="M7 7 L12.6 4 V10 L7 13.2 Z" fill="#e0e0e0"/></svg>
<svg style="left:1249px;top:501px" width="5" height="8"><path d="M0.6 8 V0.6 H4.5" fill="none" stroke="#bbbbbb" stroke-width="1.1"/></svg>
<svg style="left:1249px;top:514px" width="5" height="8"><path d="M0.6 0 V7.4 H4.5" fill="none" stroke="#bbbbbb" stroke-width="1.1"/></svg>
<div class="a" style="left:244px;top:502.8px;font-family:'Liberation Mono',monospace;font-size:13px;letter-spacing:-0.3px;line-height:15px"><span style="color:#1fa3c8;">api_1     |</span><span style="color:#cccccc;"> 2021/10/17 18:57:17 Server started at port 5500</span></div>
<div class="a" style="left:244px;top:517.8px;font-family:'Liberation Mono',monospace;font-size:13px;letter-spacing:-0.3px;line-height:15px"><span style="color:#d6d625;">server_1  |</span><span style="color:#cccccc;"> 2021/10/17 18:57:17 server listening at [::]:50051</span></div>
<div class="a" style="left:244px;top:532.8px;font-family:'Liberation Mono',monospace;font-size:13px;letter-spacing:-0.3px;line-height:15px"><span style="color:#cccccc;">^CGracefully stopping... (press Ctrl+C again to force)</span></div>
<div class="a" style="left:244px;top:547.8px;font-family:'Liberation Mono',monospace;font-size:13px;letter-spacing:-0.3px;line-height:15px"><span style="color:#cccccc;">Stopping app-compose_api_1    ... </span><span style="color:#10b87a;">done</span></div>
<div class="a" style="left:244px;top:562.8px;font-family:'Liberation Mono',monospace;font-size:13px;letter-spacing:-0.3px;line-height:15px"><span style="color:#cccccc;">Stopping app-compose_server_1 ... </span><span style="color:#10b87a;">done</span></div>
<div class="a" style="left:244px;top:577.8px;font-family:'Liberation Mono',monospace;font-size:13px;letter-spacing:-0.3px;line-height:15px"><span style="color:#2bcf8c;font-weight:bold;">abbos@abbos-Aspire-A315-57G</span><span style="color:#cccccc;">:</span><span style="color:#4a90e2;font-weight:bold;">~/Desktop/app-compose</span><span style="color:#cccccc;">$ docker-compo</span></div>
<div class="a" style="left:244px;top:592.8px;font-family:'Liberation Mono',monospace;font-size:13px;letter-spacing:-0.3px;line-height:15px"><span style="color:#cccccc;">se up</span></div>
<div class="a" style="left:244px;top:607.8px;font-family:'Liberation Mono',monospace;font-size:13px;letter-spacing:-0.3px;line-height:15px"><span style="color:#cccccc;">Starting app-compose_server_1 ... </span><span style="color:#10b87a;">done</span></div>
<div class="a" style="left:244px;top:622.8px;font-family:'Liberation Mono',monospace;font-size:13px;letter-spacing:-0.3px;line-height:15px"><span style="color:#cccccc;">Starting app-compose_api_1    ... </span><span style="color:#10b87a;">done</span></div>
<div class="a" style="left:244px;top:637.8px;font-family:'Liberation Mono',monospace;font-size:13px;letter-spacing:-0.3px;line-height:15px"><span style="color:#cccccc;">Attaching to app-compose_server_1, app-compose_api_1</span></div>
<div class="a" style="left:244px;top:652.8px;font-family:'Liberation Mono',monospace;font-size:13px;letter-spacing:-0.3px;line-height:15px"><span style="color:#d6d625;">server_1  |</span><span style="color:#cccccc;"> 2021/10/17 19:11:12 server listening at [::]:50051</span></div>
<div class="a" style="left:244px;top:667.8px;font-family:'Liberation Mono',monospace;font-size:13px;letter-spacing:-0.3px;line-height:15px"><span style="color:#1fa3c8;">api_1     |</span><span style="color:#cccccc;"> 2021/10/17 19:11:12 Server started at port 5500</span></div>
<div class="b" style="left:244px;top:682px;width:8px;height:15px;border:1px solid #cccccc"></div>
<div class="a" style="left:741px;top:502.8px;font-family:'Liberation Mono',monospace;font-size:13px;letter-spacing:-0.3px;line-height:15px"><span style="color:#2bcf8c;font-weight:bold;">abbos@abbos-Aspire-A315-57G</span><span style="color:#cccccc;">:</span><span style="color:#4a90e2;font-weight:bold;">~/Desktop/app-compose</span><span style="color:#cccccc;">$ docker netwo</span></div>
<div class="a" style="left:741px;top:517.8px;font-family:'Liberation Mono',monospace;font-size:13px;letter-spacing:-0.3px;line-height:15px"><span style="color:#cccccc;">rk ls</span></div>
<div class="a" style="left:741px;top:532.8px;font-family:'Liberation Mono',monospace;font-size:13px;letter-spacing:-0.3px;line-height:15px"><span style="color:#cccccc;">NETWORK ID     NAME                  DRIVER    SCOPE</span></div>
<div class="a" style="left:741px;top:547.8px;font-family:'Liberation Mono',monospace;font-size:13px;letter-spacing:-0.3px;line-height:15px"><span style="color:#cccccc;">5c570291d37f   app-compose_default   bridge    local</span></div>
<div class="a" style="left:741px;top:562.8px;font-family:'Liberation Mono',monospace;font-size:13px;letter-spacing:-0.3px;line-height:15px"><span style="color:#cccccc;">b7b79213b912   bridge                bridge    local</span></div>
<div class="a" style="left:741px;top:577.8px;font-family:'Liberation Mono',monospace;font-size:13px;letter-spacing:-0.3px;line-height:15px"><span style="color:#cccccc;">811fffc9ebb5   host                  host      local</span></div>
<div class="a" style="left:741px;top:592.8px;font-family:'Liberation Mono',monospace;font-size:13px;letter-spacing:-0.3px;line-height:15px"><span style="color:#cccccc;">ed740f5888c4   none                  null      local</span></div>
<div class="a" style="left:741px;top:607.8px;font-family:'Liberation Mono',monospace;font-size:13px;letter-spacing:-0.3px;line-height:15px"><span style="color:#cccccc;">f1cf1bdce009   test                  bridge    local</span></div>
<div class="a" style="left:741px;top:622.8px;font-family:'Liberation Mono',monospace;font-size:13px;letter-spacing:-0.3px;line-height:15px"><span style="color:#2bcf8c;font-weight:bold;">abbos@abbos-Aspire-A315-57G</span><span style="color:#cccccc;">:</span><span style="color:#4a90e2;font-weight:bold;">~/Desktop/app-compose</span><span style="color:#cccccc;">$ </span></div>
<div class="b" style="left:1123.5px;top:622px;width:8px;height:15px;border:1px solid #cccccc"></div>
<svg style="left:15px;top:702px" width="11" height="14" viewBox="0 0 11 14"><g fill="none" stroke="#fff" stroke-width="1.2"><circle cx="2.5" cy="2.5" r="1.8"/><circle cx="8.5" cy="4.5" r="1.8"/><circle cx="2.5" cy="11.5" r="1.8"/><path d="M2.5 4.3 V9.7 M8.5 6.3 C8.5 9 2.5 8 2.5 9.7"/></g></svg>
<div class="a" style="left:30.50px;top:700.50px;font-size:12px;line-height:16px;color:#ffffff;letter-spacing:-0.179px;">master*</div>
<svg style="left:87px;top:704px" width="12.5" height="10" viewBox="0 0 14 12"><g fill="none" stroke="#fff" stroke-width="1.1"><path d="M4 9.5 H3 C1.5 9.5 0.6 8.3 0.6 7 C0.6 5.6 1.7 4.6 3 4.6 C3.4 2.4 5 1 7 1 C9.3 1 10.8 2.6 11 4.6 C12.3 4.6 13.4 5.6 13.4 7 C13.4 8.3 12.4 9.5 11 9.5 H10"/><path d="M7 11.5 V5.5 M5 7.5 L7 5.5 L9 7.5"/></g></svg>
<div class="a" style="left:114.40px;top:700.50px;font-size:12px;line-height:16px;color:#ffffff;letter-spacing:-0.866px;">Go 1.17.2</div>
<svg style="left:163px;top:702px" width="10" height="14"><path d="M7 0.8 L2.5 8 H5.5 L3 13.2 L8.5 5.5 H5.5 Z" fill="none" stroke="#fff" stroke-width="1"/></svg>
<svg style="left:190px;top:702px" width="13" height="13"><circle cx="6.3" cy="6.5" r="5.6" fill="none" stroke="#fff" stroke-width="1.1"/><path d="M4 4.2 L8.6 8.8 M8.6 4.2 L4 8.8" stroke="#fff" stroke-width="1.1"/></svg>
<div class="a" style="left:205.60px;top:700.50px;font-size:12px;line-height:16px;color:#ffffff;">4</div>
<svg style="left:215px;top:702px" width="13" height="13"><path d="M6.5 1 L12.3 12 H0.7 Z" fill="none" stroke="#fff" stroke-width="1.1" stroke-linejoin="round"/><path d="M6.5 4.5 V8.5 M6.5 9.8 V11" stroke="#fff" stroke-width="1.1"/></svg>
<div class="a" style="left:231.60px;top:700.50px;font-size:12px;line-height:16px;color:#ffffff;">1</div>
<svg style="left:252px;top:702px" width="13" height="13" viewBox="0 0 13 13"><g fill="none" stroke="#fff" stroke-width="1.1"><path d="M1.8 7.5 A4.8 4.8 0 0 1 10.2 3.2"/><path d="M11.2 5.5 A4.8 4.8 0 0 1 2.8 9.8"/><path d="M10.6 0.8 V3.6 H7.8"/><path d="M2.4 12.2 V9.4 H5.2"/></g></svg>
<div class="a" style="left:266.70px;top:700.50px;font-size:12px;line-height:16px;color:#ffffff;letter-spacing:-0.292px;">Error loading workspace: You are outside of a module and outside of $GOPATH/src. If you are us</div>
<div class="a" style="left:949.30px;top:700.50px;font-size:12px;line-height:16px;color:#ffffff;letter-spacing:-0.668px;">Ln 16, Col 33</div>
<div class="a" style="left:1029.00px;top:700.50px;font-size:12px;line-height:16px;color:#ffffff;letter-spacing:-0.962px;">Spaces: 2</div>
<div class="a" style="left:1090.60px;top:700.50px;font-size:12px;line-height:16px;color:#ffffff;letter-spacing:-1.231px;">UTF-8</div>
<div class="a" style="left:1135.70px;top:700.50px;font-size:12px;line-height:16px;color:#ffffff;letter-spacing:-2.174px;">LF</div>
<div class="a" style="left:1162.60px;top:700.50px;font-size:12px;line-height:16px;color:#ffffff;letter-spacing:-0.781px;">Compose</div>
<svg style="left:1225px;top:702px" width="13" height="13"><g fill="none" stroke="#fff" stroke-width="1.1"><circle cx="4.5" cy="4" r="2.5"/><path d="M0.8 12 C1 9 2.5 7.5 4.5 7.5 C6 7.5 7 8.3 7.5 9.5"/><path d="M6.5 1 H12.3 V7 H9.5"/></g></svg>
<svg style="left:1254px;top:701px" width="13" height="15"><path d="M2 11 V6.5 C2 3.8 3.8 2.5 6 2.5 C8.2 2.5 10 3.8 10 6.5 V11 H1 M4.5 13 H7.5" fill="none" stroke="#fff" stroke-width="1.1"/><circle cx="10" cy="3.5" r="2.6" fill="#fff"/></svg>
</body></html>
